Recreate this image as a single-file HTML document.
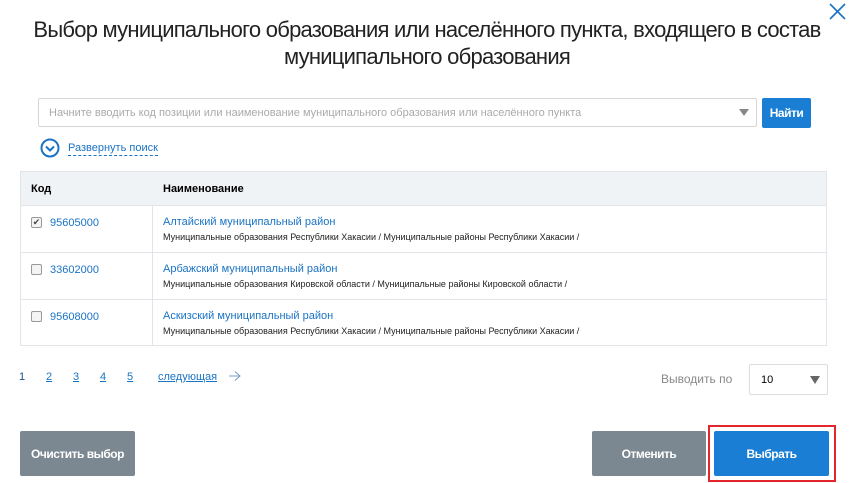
<!DOCTYPE html>
<html><head><meta charset="utf-8"><style>
body{margin:0;width:854px;height:483px;background:#fff;font-family:"Liberation Sans",Arial,sans-serif;position:relative;overflow:hidden}
.a{position:absolute}
h1{position:absolute;left:0;top:16px;width:854px;margin:0;text-align:center;font-weight:normal;font-size:22px;line-height:27px;color:#222;letter-spacing:-0.75px}
.link{color:#1a73c4}
.tbl{left:20px;top:171px;width:807px;height:175px;border:1px solid #e1e5e9;box-sizing:border-box}
.row{position:absolute;left:0;width:805px;border-top:1px solid #e1e5e9}
.btn{position:absolute;height:45px;color:#fff;font-size:12px;font-weight:bold;display:flex;align-items:center;justify-content:center;border-radius:2px;letter-spacing:-0.5px}
.s{font-size:10px;color:#222}
.cb{position:absolute;left:10px;width:9px;height:9px;border:1px solid #999;border-radius:2px;background:#f4f4f4}
</style></head><body>
<h1>Выбор муниципального образования или населённого пункта, входящего в состав<br>муниципального образования</h1>
<svg class="a" style="left:829px;top:3px" width="17" height="17"><path d="M1 1L16 16M16 1L1 16" stroke="#1a73c4" stroke-width="1.6"/></svg>
<div class="a" style="left:38px;top:98px;width:719px;height:29px;border:1px solid #d6d6d6;border-radius:2px;box-sizing:border-box"></div>
<div class="a" style="left:49px;top:107px;font-size:11px;color:#aaa">Начните вводить код позиции или наименование муниципального образования или населённого пункта</div>
<svg class="a" style="left:739px;top:109px" width="10" height="8"><path d="M0 0H10L5 7Z" fill="#888"/></svg>
<div class="btn" style="left:762px;top:98px;width:49px;height:30px;background:#1a7fd4">Найти</div>
<svg class="a" style="left:40px;top:138px" width="20" height="20"><circle cx="10" cy="10" r="8.5" fill="none" stroke="#1a73c4" stroke-width="2"/><path d="M6 8.5L10 12.5L14 8.5" fill="none" stroke="#1a73c4" stroke-width="2"/></svg>
<div class="a link" style="left:68px;top:142px;font-size:11px;border-bottom:1px dashed #1a73c4;line-height:13px">Развернуть поиск</div>
<div class="a tbl">
<div class="a" style="left:0;top:0;width:805px;height:33px;background:#f0f3f6"></div>
<div class="a" style="left:131px;top:33px;width:1px;height:141px;background:#e1e5e9"></div>
<div class="a" style="left:10px;top:11px;font-size:11px;font-weight:bold">Код</div>
<div class="a" style="left:142px;top:11px;font-size:11px;font-weight:bold">Наименование</div>
<div class="row" style="top:33px;height:47px">
<div class="cb" style="top:11px;font-size:9px;line-height:9px;text-align:center;color:#444">✔</div>
<div class="a link" style="left:29px;top:11px;font-size:11px">95605000</div>
<div class="a link" style="left:142px;top:10px;font-size:11px">Алтайский муниципальный район</div>
<div class="a s" style="left:142px;top:26px;font-size:9px">Муниципальные образования Республики Хакасии / Муниципальные районы Республики Хакасии /</div></div>
<div class="row" style="top:80px;height:47px">
<div class="cb" style="top:11px"></div>
<div class="a link" style="left:29px;top:11px;font-size:11px">33602000</div>
<div class="a link" style="left:142px;top:10px;font-size:11px">Арбажский муниципальный район</div>
<div class="a s" style="left:142px;top:26px;font-size:9px">Муниципальные образования Кировской области / Муниципальные районы Кировской области /</div></div>
<div class="row" style="top:127px;height:47px">
<div class="cb" style="top:11px"></div>
<div class="a link" style="left:29px;top:11px;font-size:11px">95608000</div>
<div class="a link" style="left:142px;top:10px;font-size:11px">Аскизский муниципальный район</div>
<div class="a s" style="left:142px;top:26px;font-size:9px">Муниципальные образования Республики Хакасии / Муниципальные районы Республики Хакасии /</div></div>
</div>
<div class="a" style="left:19px;top:371px;font-size:11px;color:#1a4f8a">1</div>
<div class="a link" style="left:46px;top:371px;font-size:11px;text-decoration:underline">2</div>
<div class="a link" style="left:73px;top:371px;font-size:11px;text-decoration:underline">3</div>
<div class="a link" style="left:100px;top:371px;font-size:11px;text-decoration:underline">4</div>
<div class="a link" style="left:127px;top:371px;font-size:11px;text-decoration:underline">5</div>
<div class="a link" style="left:158px;top:371px;font-size:11px;text-decoration:underline">следующая</div>
<svg class="a" style="left:229px;top:371px" width="12" height="10"><path d="M0 5H11M6 0.5L11 5L6 9.5" fill="none" stroke="#7a9cc4" stroke-width="1"/></svg>
<div class="a" style="left:661px;top:372px;font-size:12px;color:#888">Выводить по</div>
<div class="a" style="left:749px;top:364px;width:79px;height:31px;border:1px solid #ddd;border-radius:2px;box-sizing:border-box"></div>
<div class="a" style="left:761px;top:374px;font-size:11px">10</div>
<svg class="a" style="left:810px;top:376px" width="10" height="9"><path d="M0 0H10L5 8Z" fill="#666"/></svg>
<div class="btn" style="left:20px;top:431px;width:115px;background:#7b8791">Очистить выбор</div>
<div class="btn" style="left:592px;top:431px;width:114px;background:#7b8791">Отменить</div>
<div class="a" style="left:708px;top:425px;width:128px;height:57px;border:2px solid #e3262e;box-sizing:border-box"></div>
<div class="btn" style="left:714px;top:431px;width:115px;background:#1a7fd4">Выбрать</div>
</body></html>
